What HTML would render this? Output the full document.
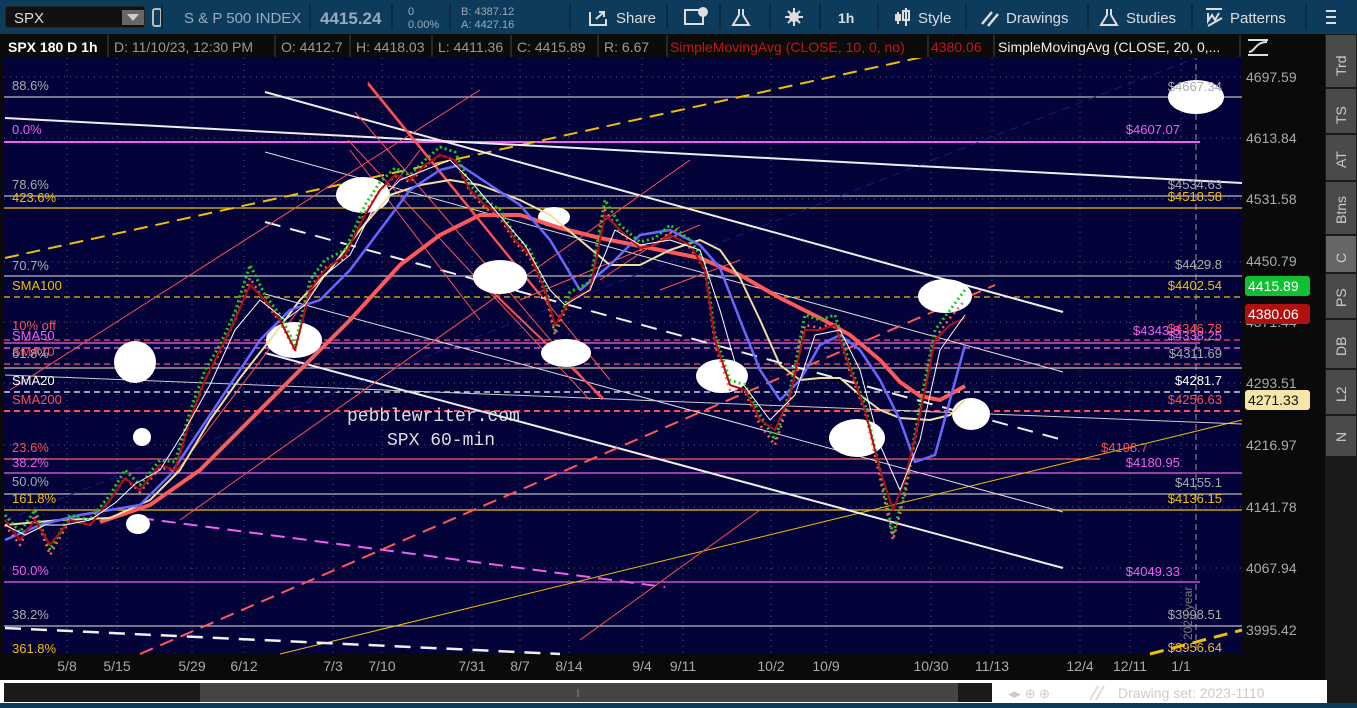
<!DOCTYPE html>
<html><head><meta charset="utf-8"><style>
html,body{margin:0;padding:0;width:1357px;height:708px;overflow:hidden;background:#0a0a0a;font-family:"Liberation Sans",sans-serif}
</style></head><body>
<svg width="1357" height="708" viewBox="0 0 1357 708" xmlns="http://www.w3.org/2000/svg" font-family="Liberation Sans, sans-serif">
<rect x="0" y="0" width="1357" height="34" fill="#0c3b5c"/>
<rect x="5" y="6" width="140" height="22" rx="3" fill="#111" stroke="#333"/>
<text x="14" y="23" font-size="15" fill="#ddd">SPX</text>
<rect x="122" y="10" width="22" height="15" fill="#666"/><path d="M127 14h12l-6 7z" fill="#ccc"/>
<rect x="153" y="9" width="8" height="17" rx="2" fill="none" stroke="#bbb" stroke-width="2"/>
<text x="184" y="23" font-size="15" fill="#9ab">S &amp; P 500 INDEX</text>
<text x="320" y="24" font-size="17" font-weight="bold" fill="#9ab">4415.24</text>
<text x="408" y="15" font-size="11" fill="#9ab">0</text><text x="408" y="28" font-size="11" fill="#9ab">0.00%</text>
<text x="461" y="15" font-size="11" fill="#9ab">B: 4387.12</text><text x="461" y="28" font-size="11" fill="#9ab">A: 4427.16</text>
<g stroke="#0a2a44" stroke-width="2"><line x1="162" y1="4" x2="162" y2="30"/><line x1="310" y1="4" x2="310" y2="30"/><line x1="392" y1="4" x2="392" y2="30"/><line x1="450" y1="4" x2="450" y2="30"/><line x1="570" y1="4" x2="570" y2="30"/><line x1="667" y1="4" x2="667" y2="30"/><line x1="720" y1="4" x2="720" y2="30"/><line x1="770" y1="4" x2="770" y2="30"/><line x1="820" y1="4" x2="820" y2="30"/><line x1="878" y1="4" x2="878" y2="30"/><line x1="966" y1="4" x2="966" y2="30"/><line x1="1088" y1="4" x2="1088" y2="30"/><line x1="1192" y1="4" x2="1192" y2="30"/><line x1="1306" y1="4" x2="1306" y2="30"/></g>
<path d="M590 12v13h16v-6M596 19l8-7M599 12h5v5" stroke="#ddd" stroke-width="2" fill="none"/>
<text x="616" y="23" font-size="15" fill="#ddd">Share</text>
<rect x="685" y="10" width="18" height="14" fill="none" stroke="#ddd" stroke-width="2"/><circle cx="703" cy="12" r="5" fill="#ddd"/>
<path d="M739 9v6l-6 10h16l-6-10v-6" stroke="#ddd" stroke-width="2" fill="none"/>
<circle cx="794" cy="17" r="5" fill="#ddd"/><path d="M794 8v18M785 17h18M788 11l12 12M800 11l-12 12" stroke="#ddd" stroke-width="2"/>
<text x="838" y="23" font-size="14" font-weight="bold" fill="#ddd">1h</text>
<path d="M898 12v12M906 8v18" stroke="#ddd" stroke-width="2"/><rect x="895" y="14" width="6" height="7" fill="#ddd"/><rect x="903" y="11" width="6" height="9" fill="none" stroke="#ddd" stroke-width="2"/>
<text x="918" y="23" font-size="15" fill="#ddd">Style</text>
<path d="M982 24l10-12M988 26l10-12" stroke="#ddd" stroke-width="2.5"/>
<text x="1006" y="23" font-size="15" fill="#ddd">Drawings</text>
<path d="M1107 9v6l-6 10h16l-6-10v-6" stroke="#ddd" stroke-width="2" fill="none"/>
<text x="1126" y="23" font-size="15" fill="#ddd">Studies</text>
<path d="M1206 9h16M1208 26l14-8M1208 13v8l4-6 3 5 4-7" stroke="#ddd" stroke-width="2" fill="none"/>
<text x="1230" y="23" font-size="15" fill="#ddd">Patterns</text>
<path d="M1326 11h10M1326 17h10M1326 23h10" stroke="#ddd" stroke-width="2"/>
<rect x="4" y="34" width="1238" height="620" fill="#03033a"/>
<g stroke="#555a7a" stroke-width="1" stroke-dasharray="1,5">
<line x1="4" y1="77" x2="1242" y2="77"/><line x1="4" y1="138" x2="1242" y2="138"/><line x1="4" y1="199" x2="1242" y2="199"/><line x1="4" y1="262" x2="1242" y2="262"/><line x1="4" y1="322" x2="1242" y2="322"/><line x1="4" y1="383" x2="1242" y2="383"/><line x1="4" y1="445" x2="1242" y2="445"/><line x1="4" y1="507" x2="1242" y2="507"/><line x1="4" y1="568" x2="1242" y2="568"/>
<line x1="67" y1="34" x2="67" y2="654"/><line x1="117" y1="34" x2="117" y2="654"/><line x1="192" y1="34" x2="192" y2="654"/><line x1="244" y1="34" x2="244" y2="654"/><line x1="333" y1="34" x2="333" y2="654"/><line x1="382" y1="34" x2="382" y2="654"/><line x1="472" y1="34" x2="472" y2="654"/><line x1="520" y1="34" x2="520" y2="654"/><line x1="569" y1="34" x2="569" y2="654"/><line x1="642" y1="34" x2="642" y2="654"/><line x1="683" y1="34" x2="683" y2="654"/><line x1="771" y1="34" x2="771" y2="654"/><line x1="826" y1="34" x2="826" y2="654"/><line x1="931" y1="34" x2="931" y2="654"/><line x1="992" y1="34" x2="992" y2="654"/><line x1="1080" y1="34" x2="1080" y2="654"/><line x1="1130" y1="34" x2="1130" y2="654"/><line x1="1181" y1="34" x2="1181" y2="654"/>
</g>
<line x1="1196" y1="34" x2="1196" y2="654" stroke="#999" stroke-dasharray="6,4"/>
<g stroke-width="1.2">
<line x1="4" y1="97" x2="1242" y2="97" stroke="#bbb"/>
<line x1="4" y1="142" x2="1200" y2="142" stroke="#f060f0" stroke-width="2"/>
<line x1="4" y1="196" x2="1242" y2="196" stroke="#bbb"/>
<line x1="4" y1="208" x2="1242" y2="208" stroke="#f0c000"/>
<line x1="4" y1="276" x2="1242" y2="276" stroke="#bbb"/>
<line x1="4" y1="297" x2="1242" y2="297" stroke="#f0c000" stroke-dasharray="6,4"/>
<line x1="4" y1="340" x2="1242" y2="340" stroke="#ff5050" stroke-dasharray="6,4"/>
<line x1="4" y1="343" x2="1200" y2="343" stroke="#f060f0"/>
<line x1="4" y1="348" x2="1242" y2="348" stroke="#f070f0" stroke-dasharray="6,4"/>
<line x1="4" y1="364" x2="1242" y2="364" stroke="#ff5050" stroke-dasharray="6,4"/>
<line x1="4" y1="368" x2="1242" y2="368" stroke="#bbb"/>
<line x1="4" y1="392" x2="1242" y2="392" stroke="#fff" stroke-dasharray="6,4"/>
<line x1="4" y1="411" x2="1242" y2="411" stroke="#ff5050" stroke-dasharray="6,4" stroke-width="2"/>
<line x1="4" y1="459" x2="1100" y2="459" stroke="#ff6060"/>
<line x1="4" y1="473" x2="1242" y2="473" stroke="#f060f0"/>
<line x1="4" y1="494" x2="1242" y2="494" stroke="#bbb"/>
<line x1="4" y1="510" x2="1242" y2="510" stroke="#f0c000"/>
<line x1="4" y1="582" x2="1200" y2="582" stroke="#f060f0"/>
<line x1="4" y1="626" x2="1242" y2="626" stroke="#bbb"/>
</g>
<g fill="none">
<line x1="5" y1="258" x2="1000" y2="40" stroke="#f0c000" stroke-width="2" stroke-dasharray="14,8"/>
<line x1="1150" y1="654" x2="1242" y2="630" stroke="#f0c000" stroke-width="3" stroke-dasharray="14,8"/>
<line x1="280" y1="654" x2="1242" y2="420" stroke="#f0c000" stroke-width="1"/>
<line x1="5" y1="118" x2="1242" y2="183" stroke="#eee" stroke-width="2"/>
<line x1="265" y1="92" x2="1063" y2="312" stroke="#eee" stroke-width="2"/>
<line x1="265" y1="152" x2="1063" y2="372" stroke="#ddd" stroke-width="1"/>
<line x1="265" y1="222" x2="1063" y2="440" stroke="#eee" stroke-width="2" stroke-dasharray="16,10"/>
<line x1="265" y1="294" x2="1063" y2="512" stroke="#ddd" stroke-width="1"/>
<line x1="265" y1="353" x2="1063" y2="568" stroke="#eee" stroke-width="2"/>
<line x1="5" y1="375" x2="1242" y2="424" stroke="#ccc" stroke-width="1"/>
<line x1="5" y1="628" x2="560" y2="654" stroke="#eee" stroke-width="2.5" stroke-dasharray="16,10"/>
<line x1="140" y1="518" x2="665" y2="587" stroke="#f060f0" stroke-width="2" stroke-dasharray="14,8"/>
<line x1="140" y1="654" x2="995" y2="285" stroke="#ff5858" stroke-width="2" stroke-dasharray="14,8"/>
<line x1="5" y1="520" x2="1242" y2="40" stroke="#1a1a8a" stroke-width="1" stroke-dasharray="8,6"/>
<g stroke="#ff5050" stroke-width="1">
<line x1="368" y1="82" x2="610" y2="380"/><line x1="355" y1="112" x2="602" y2="400"/><line x1="348" y1="140" x2="590" y2="400"/><line x1="480" y1="320" x2="350" y2="150"/>
<line x1="10" y1="390" x2="480" y2="90"/><line x1="170" y1="480" x2="420" y2="150"/><line x1="180" y1="520" x2="690" y2="160"/><line x1="520" y1="300" x2="700" y2="225"/><line x1="580" y1="640" x2="760" y2="510"/><line x1="600" y1="280" x2="680" y2="227"/><line x1="660" y1="290" x2="740" y2="260"/>
</g>
<g stroke="#ff5050" stroke-width="2"><line x1="368" y1="84" x2="540" y2="295"/><line x1="480" y1="280" x2="603" y2="398"/></g>
</g>
<g fill="#fff">
<ellipse cx="1196" cy="97" rx="28" ry="17"/><ellipse cx="363" cy="195" rx="27" ry="18"/><ellipse cx="554" cy="217" rx="16" ry="10"/><ellipse cx="500" cy="277" rx="27" ry="17"/><ellipse cx="294" cy="340" rx="28" ry="18"/><ellipse cx="135" cy="362" rx="21" ry="21"/><ellipse cx="566" cy="353" rx="25" ry="14"/><ellipse cx="722" cy="376" rx="26" ry="17"/><ellipse cx="857" cy="438" rx="28" ry="19"/><ellipse cx="945" cy="296" rx="27" ry="17"/><ellipse cx="971" cy="414" rx="19" ry="16"/><ellipse cx="142" cy="437" rx="9" ry="9"/><ellipse cx="138" cy="524" rx="12" ry="10"/>
</g>
<g fill="none" stroke-linejoin="round">
<polyline stroke="#ff5a5a" stroke-width="4" points="100,522 150,505 200,470 250,420 300,370 350,320 400,265 440,235 480,215 520,215 560,228 600,238 650,248 700,258 740,275 780,298 820,318 850,335 880,360 900,382 920,396 940,400 965,386"/>
<polyline stroke="#f0e0a0" stroke-width="2" points="5,525 60,520 110,518 150,500 180,470 210,420 240,378 270,340 300,300 330,270 360,230 390,195 420,185 450,180 480,185 520,200 550,215 580,240 610,265 640,265 670,250 700,240 720,250 740,278 760,320 780,365 800,380 820,378 840,378 860,395 880,410 900,418 930,420 950,415 965,400"/>
<polyline stroke="#6868ff" stroke-width="2.5" points="5,540 40,525 80,515 110,510 140,505 170,475 200,430 230,385 260,340 290,310 320,300 350,270 380,230 410,190 440,170 460,165 490,185 520,205 550,240 580,290 610,265 640,235 670,230 700,245 720,268 740,320 760,370 780,400 800,380 820,345 840,335 860,350 880,380 900,420 915,462 935,455 950,400 965,345"/>
<polyline stroke="#22cc22" stroke-width="3" stroke-dasharray="2,3" points="5,515 20,532 35,510 50,550 70,515 90,520 110,495 125,470 140,485 160,460 175,462 190,412 205,370 220,345 235,312 250,265 265,295 280,315 295,345 310,280 325,260 345,250 365,205 380,182 395,168 410,175 425,160 440,147 455,152 470,185 485,200 500,210 515,235 530,250 545,285 555,330 570,292 590,282 605,200 620,225 640,242 655,238 670,225 690,240 705,262 715,335 730,380 745,385 760,415 775,440 790,390 805,315 820,320 835,315 850,365 865,405 880,470 893,535 905,490 920,405 935,330 950,310 965,290"/>
<polyline stroke="#ff6060" stroke-width="2.5" stroke-dasharray="2,4" points="5,525 20,545 35,515 50,555 70,520 90,525 110,500 125,478 140,492 160,468 175,470 190,420 205,380 220,352 235,320 250,278 265,302 280,322 295,352 310,288 325,268 345,258 365,212 380,190 395,176 410,182 425,166 440,155 455,160 470,192 485,208 500,218 515,242 530,258 545,292 555,335 570,300 590,290 605,210 620,232 640,250 655,245 670,232 690,248 705,270 715,345 730,390 745,392 760,425 775,445 790,398 805,325 820,328 835,322 850,372 865,412 880,478 893,540 905,495 920,412 935,338 950,318 965,300"/>
<polyline stroke="#b01010" stroke-width="2" points="5,520 20,540 35,520 50,545 70,520 90,525 110,500 125,478 140,490 160,465 175,470 190,420 205,380 220,350 235,320 250,285 265,300 280,320 295,350 310,290 325,270 345,255 365,215 380,190 395,175 410,180 425,165 440,155 455,160 470,190 485,205 500,215 515,240 530,255 545,290 555,325 570,300 590,290 605,215 620,230 640,248 655,245 670,235 690,245 705,270 715,340 730,385 745,390 760,420 775,430 790,395 805,330 820,330 835,325 850,368 865,410 880,470 893,510 905,480 920,415 935,340 950,325 965,318"/>
<polyline stroke="#ffffff" stroke-width="1" points="5,525 25,535 45,525 65,525 90,520 115,503 135,484 160,470 185,430 210,385 235,330 260,300 285,320 305,305 325,275 350,255 375,205 400,180 425,170 450,160 470,180 495,210 525,245 550,290 565,305 590,290 615,230 640,245 670,240 700,250 720,310 740,380 770,420 795,395 815,335 840,330 860,370 880,445 900,490 920,440 940,350 965,315"/>
</g>
<g font-size="13">
<text x="12" y="90" fill="#aaa">88.6%</text>
<text x="12" y="134" fill="#f060f0">0.0%</text>
<text x="12" y="189" fill="#aaa">78.6%</text>
<text x="12" y="202" fill="#f0c000">423.6%</text>
<text x="12" y="270" fill="#aaa">70.7%</text>
<text x="12" y="290" fill="#f0c000">SMA100</text>
<text x="12" y="330" fill="#ff5050">10% off</text>
<text x="12" y="340" fill="#f060f0">SMA50</text>
<text x="12" y="356" fill="#ff5050">SMA10</text>
<text x="12" y="358" fill="#aaa">61.8%</text>
<text x="12" y="385" fill="#fff">SMA20</text>
<text x="12" y="404" fill="#ff5050">SMA200</text>
<text x="12" y="452" fill="#ff5050">23.6%</text>
<text x="12" y="467" fill="#f060f0">38.2%</text>
<text x="12" y="486" fill="#aaa">50.0%</text>
<text x="12" y="503" fill="#f0c000">161.8%</text>
<text x="12" y="575" fill="#f060f0">50.0%</text>
<text x="12" y="619" fill="#aaa">38.2%</text>
<text x="12" y="653" fill="#f0c000">361.8%</text>
</g>
<g font-size="13" text-anchor="end">
<text x="1222" y="91" fill="#aaa">$4667.34</text>
<text x="1180" y="134" fill="#f060f0">$4607.07</text>
<text x="1222" y="189" fill="#aaa">$4534.63</text>
<text x="1222" y="201" fill="#f0c000">$4518.58</text>
<text x="1222" y="269" fill="#aaa">$4429.8</text>
<text x="1222" y="290" fill="#f0c000">$4402.54</text>
<text x="1222" y="333" fill="#ff5050">$4346.78</text>
<text x="1180" y="335" fill="#f060f0">$4343.8</text>
<text x="1222" y="340" fill="#f060f0">$4338.25</text>
<text x="1222" y="358" fill="#aaa">$4311.69</text>
<text x="1222" y="385" fill="#fff">$4281.7</text>
<text x="1222" y="404" fill="#ff5050">$4256.63</text>
<text x="1148" y="452" fill="#ff5050">$4198.7</text>
<text x="1180" y="467" fill="#f060f0">$4180.95</text>
<text x="1222" y="487" fill="#aaa">$4155.1</text>
<text x="1222" y="503" fill="#f0c000">$4136.15</text>
<text x="1180" y="576" fill="#f060f0">$4049.33</text>
<text x="1222" y="619" fill="#aaa">$3998.51</text>
<text x="1222" y="652" fill="#f0c000">$3956.64</text>
</g>
<text x="1192" y="640" font-size="12" fill="#777" transform="rotate(-90 1192 640)">2023 year</text>
<text x="347" y="421" font-family="Liberation Mono, monospace" font-size="18" fill="#ddd">pebblewriter.com</text>
<text x="387" y="445" font-family="Liberation Mono, monospace" font-size="18" fill="#ddd">SPX 60-min</text>
<rect x="4" y="34" width="1238" height="24" fill="#0b0b0b"/>
<g stroke="#444"><line x1="108" y1="35" x2="108" y2="57"/><line x1="275" y1="35" x2="275" y2="57"/><line x1="350" y1="35" x2="350" y2="57"/><line x1="432" y1="35" x2="432" y2="57"/><line x1="511" y1="35" x2="511" y2="57"/><line x1="598" y1="35" x2="598" y2="57"/><line x1="667" y1="35" x2="667" y2="57"/><line x1="928" y1="35" x2="928" y2="57"/><line x1="994" y1="35" x2="994" y2="57"/><line x1="1240" y1="35" x2="1240" y2="57"/></g>
<g font-size="14">
<text x="8" y="52" fill="#fff" font-weight="bold">SPX 180 D 1h</text>
<text x="114" y="52" fill="#999">D: 11/10/23, 12:30 PM</text>
<text x="281" y="52" fill="#999">O: 4412.7</text>
<text x="356" y="52" fill="#999">H: 4418.03</text>
<text x="438" y="52" fill="#999">L: 4411.36</text>
<text x="517" y="52" fill="#999">C: 4415.89</text>
<text x="604" y="52" fill="#999">R: 6.67</text>
<text x="670" y="52" fill="#c01818">SimpleMovingAvg (CLOSE, 10, 0, no)</text>
<text x="931" y="52" fill="#c01818">4380.06</text>
<text x="998" y="52" fill="#eee">SimpleMovingAvg (CLOSE, 20, 0,...</text>
</g>
<path d="M1248 40h20M1248 55h20M1249 52c6 0 6-10 18-10" stroke="#ddd" stroke-width="2" fill="none"/>
<g font-size="14" fill="#aaa">
<text x="1246" y="82">4697.59</text><text x="1246" y="143">4613.84</text><text x="1246" y="204">4531.58</text><text x="1246" y="266">4450.79</text><text x="1246" y="327">4371.44</text><text x="1246" y="388">4293.51</text><text x="1246" y="450">4216.97</text><text x="1246" y="512">4141.78</text><text x="1246" y="573">4067.94</text><text x="1246" y="635">3995.42</text>
</g>
<rect x="1245" y="276" width="65" height="20" rx="3" fill="#10c030"/><text x="1248" y="291" font-size="14" fill="#fff">4415.89</text>
<rect x="1245" y="304" width="65" height="20" rx="3" fill="#b01010"/><text x="1248" y="319" font-size="14" fill="#fff">4380.06</text>
<rect x="1245" y="390" width="65" height="20" rx="3" fill="#f6e6a8"/><text x="1248" y="405" font-size="14" fill="#111">4271.33</text>
<rect x="1325" y="34" width="32" height="674" fill="#1a1a1a"/>
<g fill="#4a4a4a"><rect x="1326" y="35" width="30" height="52"/><rect x="1326" y="89" width="30" height="44"/><rect x="1326" y="135" width="30" height="45"/><rect x="1326" y="182" width="30" height="52"/><rect x="1326" y="236" width="30" height="36" fill="#666"/><rect x="1326" y="274" width="30" height="44"/><rect x="1326" y="320" width="30" height="48"/><rect x="1326" y="370" width="30" height="44"/><rect x="1326" y="416" width="30" height="40"/></g>
<g font-size="14" fill="#ccc">
<text transform="translate(1346 76) rotate(-90)">Trd</text><text transform="translate(1346 124) rotate(-90)">TS</text><text transform="translate(1346 168) rotate(-90)">AT</text><text transform="translate(1346 224) rotate(-90)">Btns</text><text transform="translate(1346 263) rotate(-90)">C</text><text transform="translate(1346 307) rotate(-90)">PS</text><text transform="translate(1346 356) rotate(-90)">DB</text><text transform="translate(1346 402) rotate(-90)">L2</text><text transform="translate(1346 442) rotate(-90)">N</text>
</g>
<g font-size="14" fill="#aaa" text-anchor="middle">
<text x="67" y="671">5/8</text><text x="117" y="671">5/15</text><text x="192" y="671">5/29</text><text x="244" y="671">6/12</text><text x="333" y="671">7/3</text><text x="382" y="671">7/10</text><text x="472" y="671">7/31</text><text x="520" y="671">8/7</text><text x="569" y="671">8/14</text><text x="642" y="671">9/4</text><text x="683" y="671">9/11</text><text x="771" y="671">10/2</text><text x="826" y="671">10/9</text><text x="931" y="671">10/30</text><text x="992" y="671">11/13</text><text x="1080" y="671">12/4</text><text x="1130" y="671">12/11</text><text x="1181" y="671">1/1</text>
</g>
<rect x="0" y="680" width="1327" height="23" fill="#fff"/>
<rect x="4" y="683" width="988" height="19" fill="#1a1a1a"/>
<rect x="200" y="683" width="758" height="19" fill="#444"/>
<line x1="578" y1="689" x2="578" y2="697" stroke="#888"/>
<text x="1008" y="698" font-size="13" fill="#ccc">◂▸ ⊕ ⊕</text>
<path d="M1090 700l8-14M1096 700l8-14" stroke="#ddd" stroke-width="2"/>
<text x="1118" y="698" font-size="14" fill="#ccc">Drawing set: 2023-1110</text>
<rect x="0" y="703" width="1357" height="5" fill="#0c3b5c"/>
</svg>
</body></html>
